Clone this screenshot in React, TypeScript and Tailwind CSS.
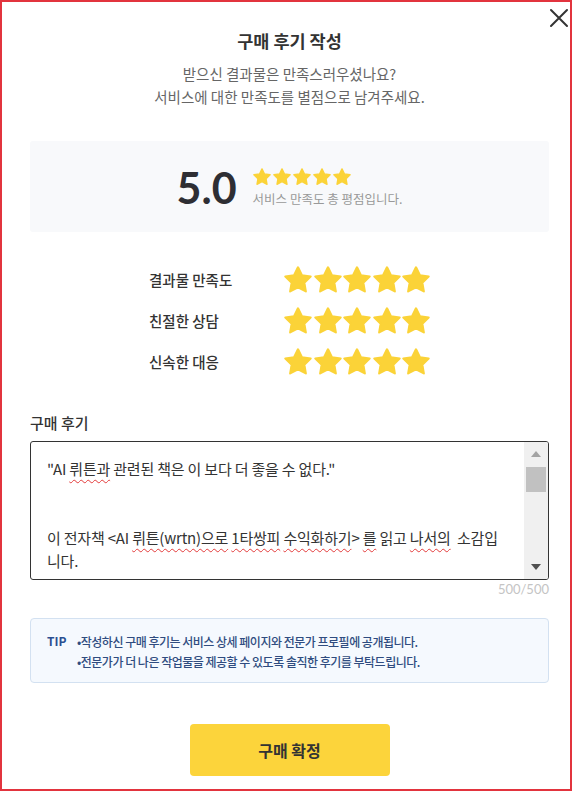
import React from "react";

const STAR_PATH =
  "M12 2.5l2.94 5.96 6.56.95-4.75 4.63 1.12 6.54L12 17.5l-5.87 3.08 1.12-6.54L2.5 9.41l6.56-.95L12 2.5z";

const Star: React.FC<{ w: number; h: number }> = ({ w, h }) => (
  <svg width={w} height={h} viewBox="1.5 1.5 21 20.5" className="shrink-0">
    <path d={STAR_PATH} fill="#fbd338" stroke="#fbd338" strokeWidth="1.6" strokeLinejoin="round" />
  </svg>
);

const Squiggle: React.FC<{ children: React.ReactNode }> = ({ children }) => (
  <span className="underline decoration-wavy decoration-[#e33b3b] decoration-1 underline-offset-[4px]">
    {children}
  </span>
);

const ratings = ["결과물 만족도", "친절한 상담", "신속한 대응"];

export default function App() {
  return (
    <div className="relative w-[572px] h-[791px] border-2 border-[#e2343e] bg-white pl-[28px] pr-[21px] pt-[27px] font-['Noto_Sans_CJK_KR',sans-serif] text-[#333]">
      {/* close */}
      <button className="absolute left-[547px] top-[6px]">
        <svg width="20" height="20" viewBox="0 0 20 20">
          <path d="M2 2L18 18M18 2L2 18" stroke="#333" strokeWidth="2" strokeLinecap="round" />
        </svg>
      </button>

      <h1 className="text-center text-[17.5px] leading-[24px] font-bold text-[#333]">
        구매 후기 작성
      </h1>
      <p className="mt-[9px] text-center text-[14.5px] leading-[23px] text-[#666]">
        받으신 결과물은 만족스러우셨나요?
        <br />
        서비스에 대한 만족도를 별점으로 남겨주세요.
      </p>

      {/* total score */}
      <div className="mt-[33px] h-[91px] rounded-[3px] bg-[#f8f9fb] flex items-center justify-center gap-[16px] pt-[2px]">
        <span className="font-['Lato',sans-serif] text-[43px] leading-none font-bold text-[#2e2e33]">5.0</span>
        <div className="flex flex-col">
          <div className="flex gap-[2px]">
            {[0, 1, 2, 3, 4].map((i) => (
              <Star key={i} w={18} h={17.5} />
            ))}
          </div>
          <span className="mt-[5px] text-[12.5px] leading-[16px] text-[#999]">
            서비스 만족도 총 평점입니다.
          </span>
        </div>
      </div>

      {/* per-item ratings */}
      <div className="mt-[34px] flex flex-col items-center gap-[13px]">
        {ratings.map((label) => (
          <div key={label} className="flex items-center h-[28px]">
            <span className="w-[135px] text-[14.5px] font-medium text-[#333]">{label}</span>
            <div className="flex gap-[1.5px]">
              {[0, 1, 2, 3, 4].map((i) => (
                <Star key={i} w={28} h={27.3} />
              ))}
            </div>
          </div>
        ))}
      </div>

      {/* review */}
      <div className="mt-[37px] text-[15px] leading-[20px] font-medium text-[#333]">구매 후기</div>
      <div className="mt-[8px] h-[139px] flex rounded-[3px] border border-[#333] overflow-hidden">
        <div className="flex-1 pl-[16px] pt-[15px] text-[15px] leading-[23px] tracking-[-0.2px] text-[#333] whitespace-pre overflow-hidden">
          <div>
            "AI <Squiggle>뤼튼과</Squiggle> 관련된 책은 이 보다 더 좋을 수 없다."
          </div>
          <div>&nbsp;</div>
          <div>&nbsp;</div>
          <div>
            이 전자책 &lt;AI <Squiggle>뤼튼(wrtn)으로</Squiggle> <Squiggle>1타쌍피</Squiggle>{" "}
            <Squiggle>수익화하기</Squiggle>&gt; <Squiggle>를</Squiggle> 읽고 <Squiggle>나서의</Squiggle>  소감입
          </div>
          <div>니다.</div>
        </div>
        <div className="w-[24px] bg-[#f0f0f0] flex flex-col">
          <div className="h-[24px] flex items-center justify-center">
            <svg width="10" height="6" viewBox="0 0 10 6">
              <path d="M5 0L10 6H0Z" fill="#a3a3a3" />
            </svg>
          </div>
          <div className="mt-[1px] mx-[2px] h-[25px] bg-[#c1c1c1]" />
          <div className="flex-1" />
          <div className="h-[24px] flex items-center justify-center">
            <svg width="10" height="6" viewBox="0 0 10 6">
              <path d="M0 0H10L5 6Z" fill="#505050" />
            </svg>
          </div>
        </div>
      </div>
      <div className="mt-[1px] text-right font-['Lato',sans-serif] text-[13px] leading-[16px] text-[#c4c4c4]">500/500</div>

      {/* tip */}
      <div className="mt-[21px] h-[65px] rounded-[4px] border border-[#d3e1f1] bg-[#f5f9fe] pl-[16px] pt-[13px] flex">
        <span className="w-[30px] shrink-0 text-[12px] leading-[17px] font-bold text-[#2b4f92]">TIP</span>
        <div className="text-[12px] leading-[20px] tracking-[-0.5px] font-medium text-[#2f4c80]">
          <div>•작성하신 구매 후기는 서비스 상세 페이지와 전문가 프로필에 공개됩니다.</div>
          <div>•전문가가 더 나은 작업물을 제공할 수 있도록 솔직한 후기를 부탁드립니다.</div>
        </div>
      </div>

      <div className="mt-[41px] flex justify-center">
        <button className="w-[200px] h-[52px] rounded-[4px] bg-[#fcd43b] text-[16px] font-bold text-[#333]">
          구매 확정
        </button>
      </div>
    </div>
  );
}
